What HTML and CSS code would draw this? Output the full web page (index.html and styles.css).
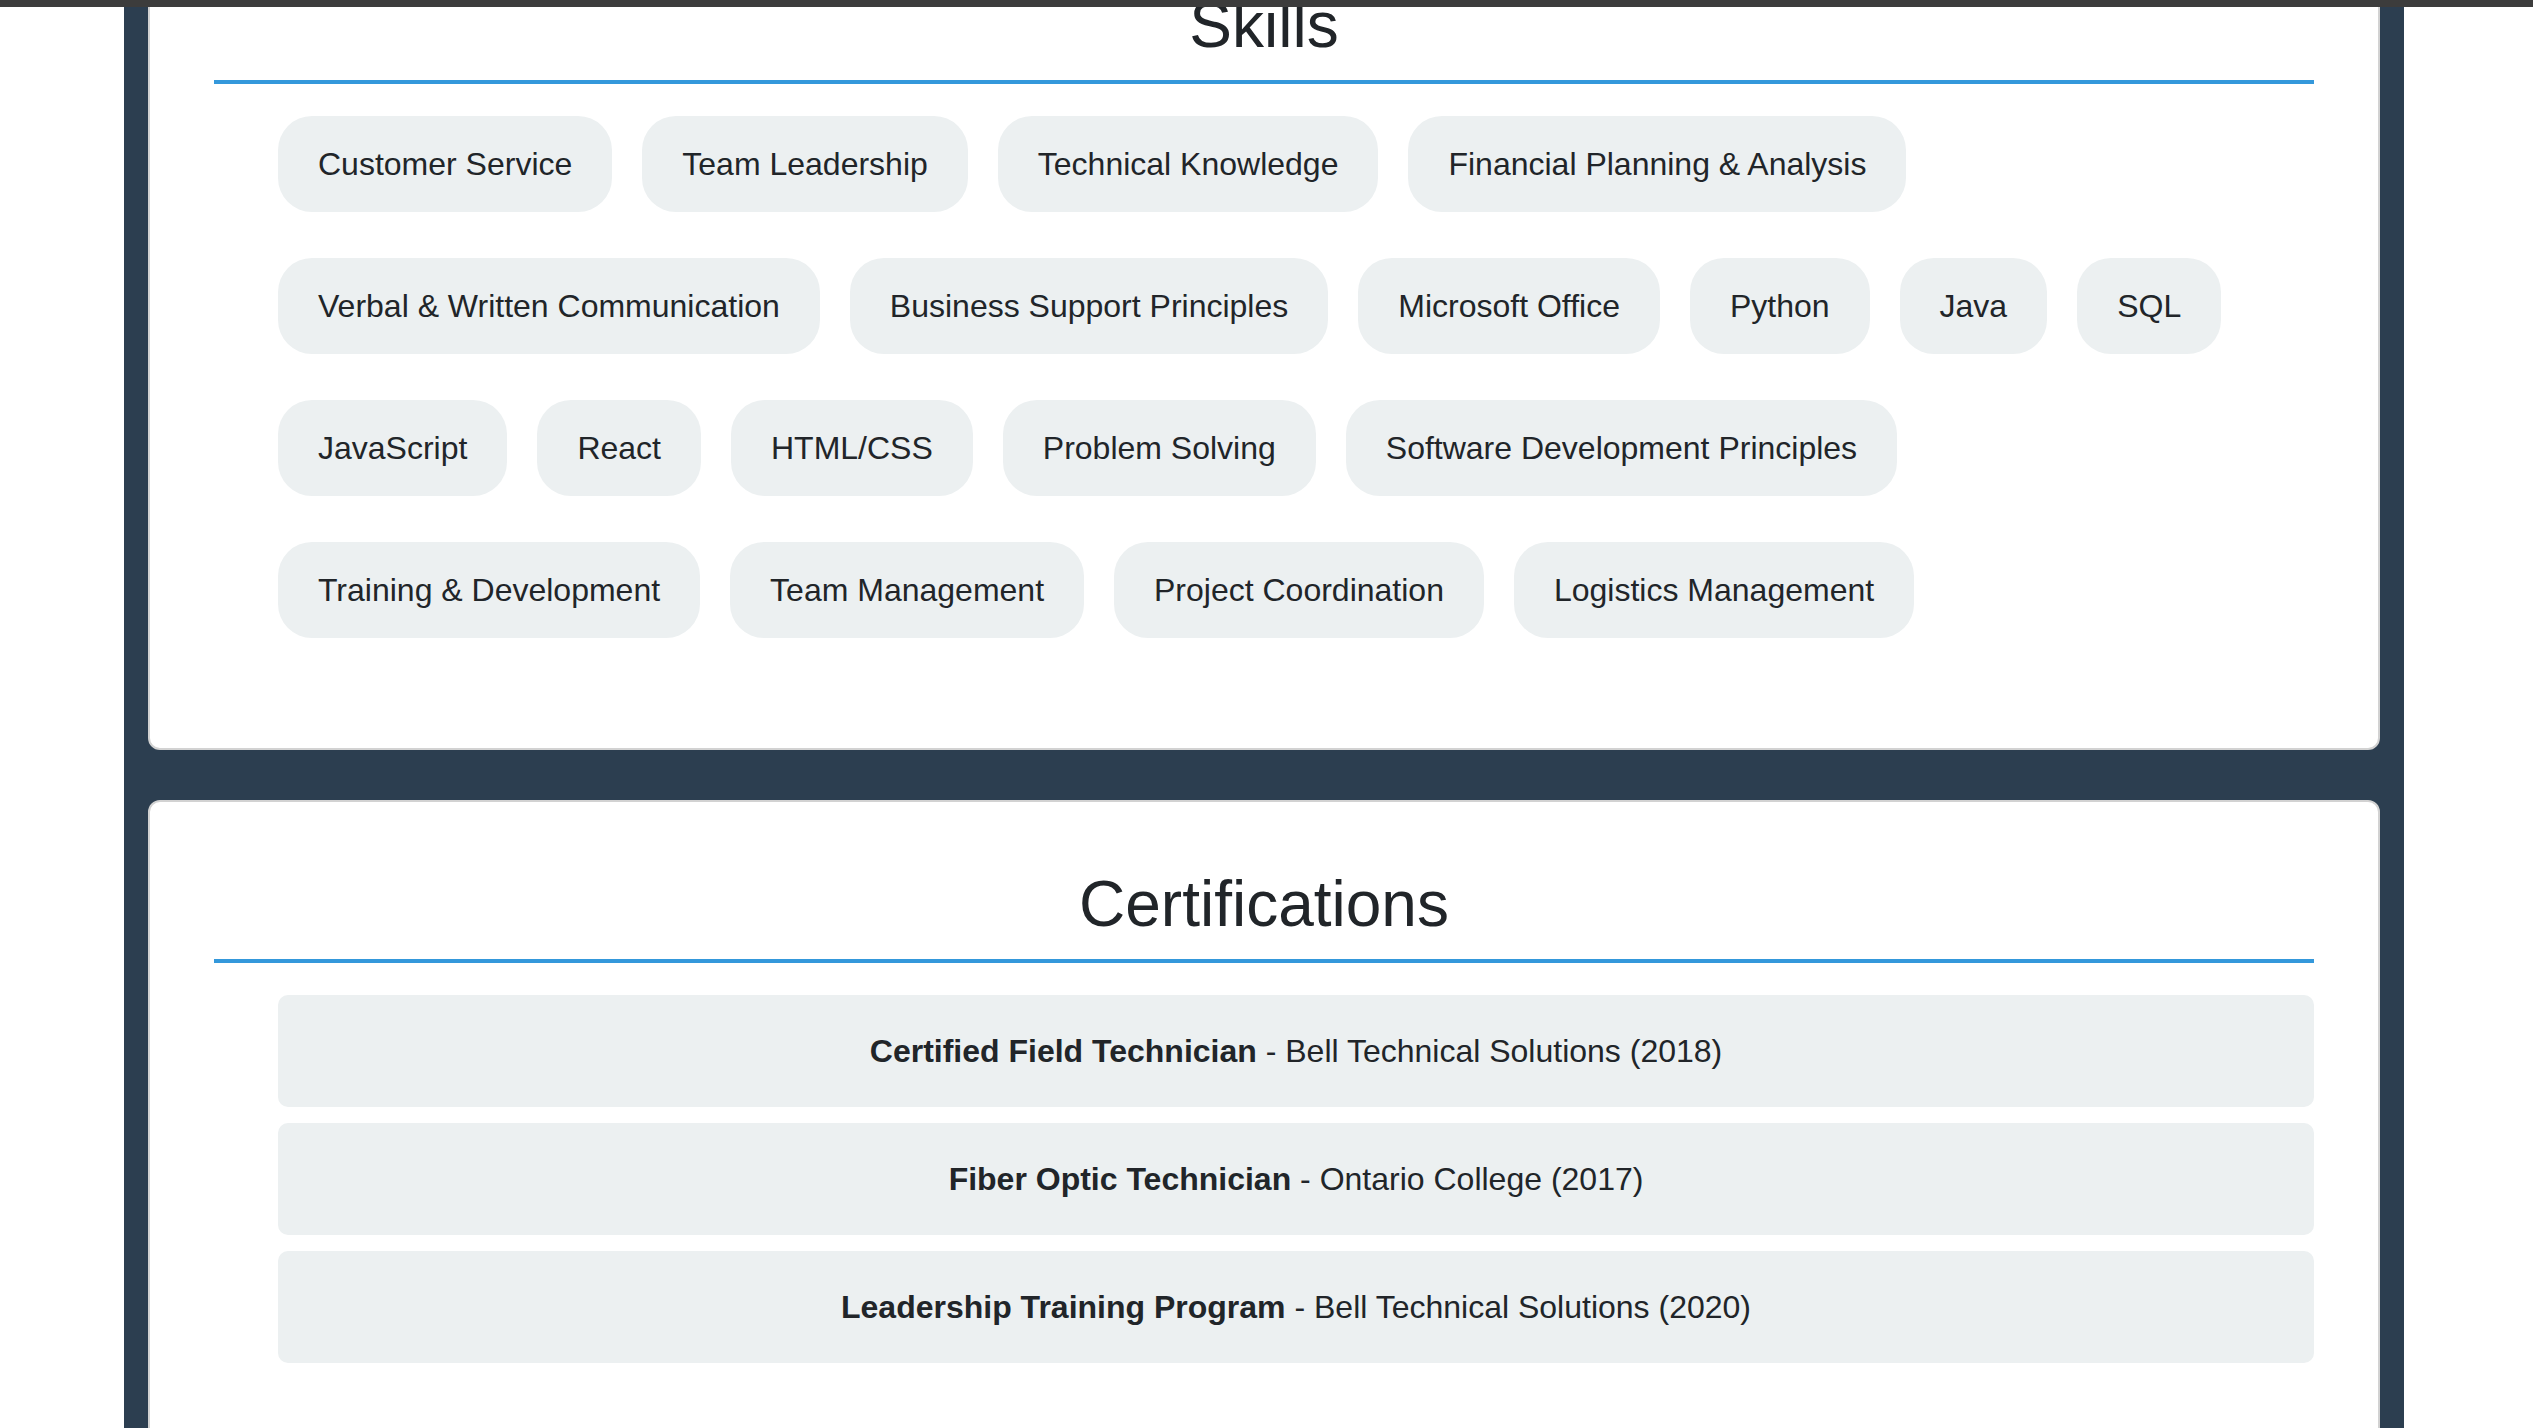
FILE: index.html
```html
<!DOCTYPE html>
<html lang="en">
<head>
<meta charset="utf-8">
<title>Resume - Skills &amp; Certifications</title>
<link rel="stylesheet" href="styles.css">
</head>
<body>
<div class="topbar"></div>
<main class="page">
  <section class="card">
    <h2 class="card-title">Skills</h2>
    <ul class="skills">
      <li class="skill">Customer Service</li>
      <li class="skill">Team Leadership</li>
      <li class="skill">Technical Knowledge</li>
      <li class="skill">Financial Planning &amp; Analysis</li>
      <li class="skill">Verbal &amp; Written Communication</li>
      <li class="skill">Business Support Principles</li>
      <li class="skill">Microsoft Office</li>
      <li class="skill">Python</li>
      <li class="skill">Java</li>
      <li class="skill">SQL</li>
      <li class="skill">JavaScript</li>
      <li class="skill">React</li>
      <li class="skill">HTML/CSS</li>
      <li class="skill">Problem Solving</li>
      <li class="skill">Software Development Principles</li>
      <li class="skill">Training &amp; Development</li>
      <li class="skill">Team Management</li>
      <li class="skill">Project Coordination</li>
      <li class="skill">Logistics Management</li>
    </ul>
  </section>
  <section class="card">
    <h2 class="card-title">Certifications</h2>
    <ul class="certs">
      <li class="cert"><strong>Certified Field Technician</strong> - Bell Technical Solutions (2018)</li>
      <li class="cert"><strong>Fiber Optic Technician</strong> - Ontario College (2017)</li>
      <li class="cert"><strong>Leadership Training Program</strong> - Bell Technical Solutions (2020)</li>
    </ul>
  </section>
</main>
</body>
</html>
```
FILE: styles.css
```css
html, body {
  margin: 0;
  padding: 0;
  background: #ffffff;
}

body {
  font-family: "Liberation Sans", Arial, Helvetica, sans-serif;
  color: #212529;
}

.topbar {
  position: fixed;
  top: 0;
  left: 0;
  right: 0;
  height: 7px;
  background: #3c3c3c;
  z-index: 10;
}

.page {
  width: 2280px;
  margin: -103px 0 0 124px;
  padding: 24px;
  box-sizing: border-box;
  background: #2c3e50;
  display: flex;
  flex-direction: column;
  gap: 50px;
  min-height: 1700px;
}

.card {
  background: #ffffff;
  border: 2px solid #d2d2d2;
  border-radius: 12px;
  padding: 65px 64px 64px;
}

.card-title {
  margin: 0 0 32px;
  font-size: 64px;
  line-height: 74px;
  font-weight: 400;
  text-align: center;
  padding-bottom: 18px;
  border-bottom: 4px solid #3498db;
}

.skills {
  list-style: none;
  margin: 0 0 46px;
  padding: 0 0 0 64px;
  display: flex;
  flex-wrap: wrap;
  gap: 46px 30px;
}

.skill {
  background: #ecf0f1;
  border-radius: 34px;
  padding: 30px 40px;
  font-size: 32px;
  line-height: 36px;
  white-space: nowrap;
}

.certs {
  list-style: none;
  margin: 0 0 46px;
  padding: 0 0 0 64px;
  display: flex;
  flex-direction: column;
  gap: 16px;
}

.cert {
  background: #ecf0f1;
  border-radius: 10px;
  padding: 38px 20px;
  font-size: 32px;
  line-height: 36px;
  text-align: center;
}

.cert strong {
  font-weight: 700;
}
```
